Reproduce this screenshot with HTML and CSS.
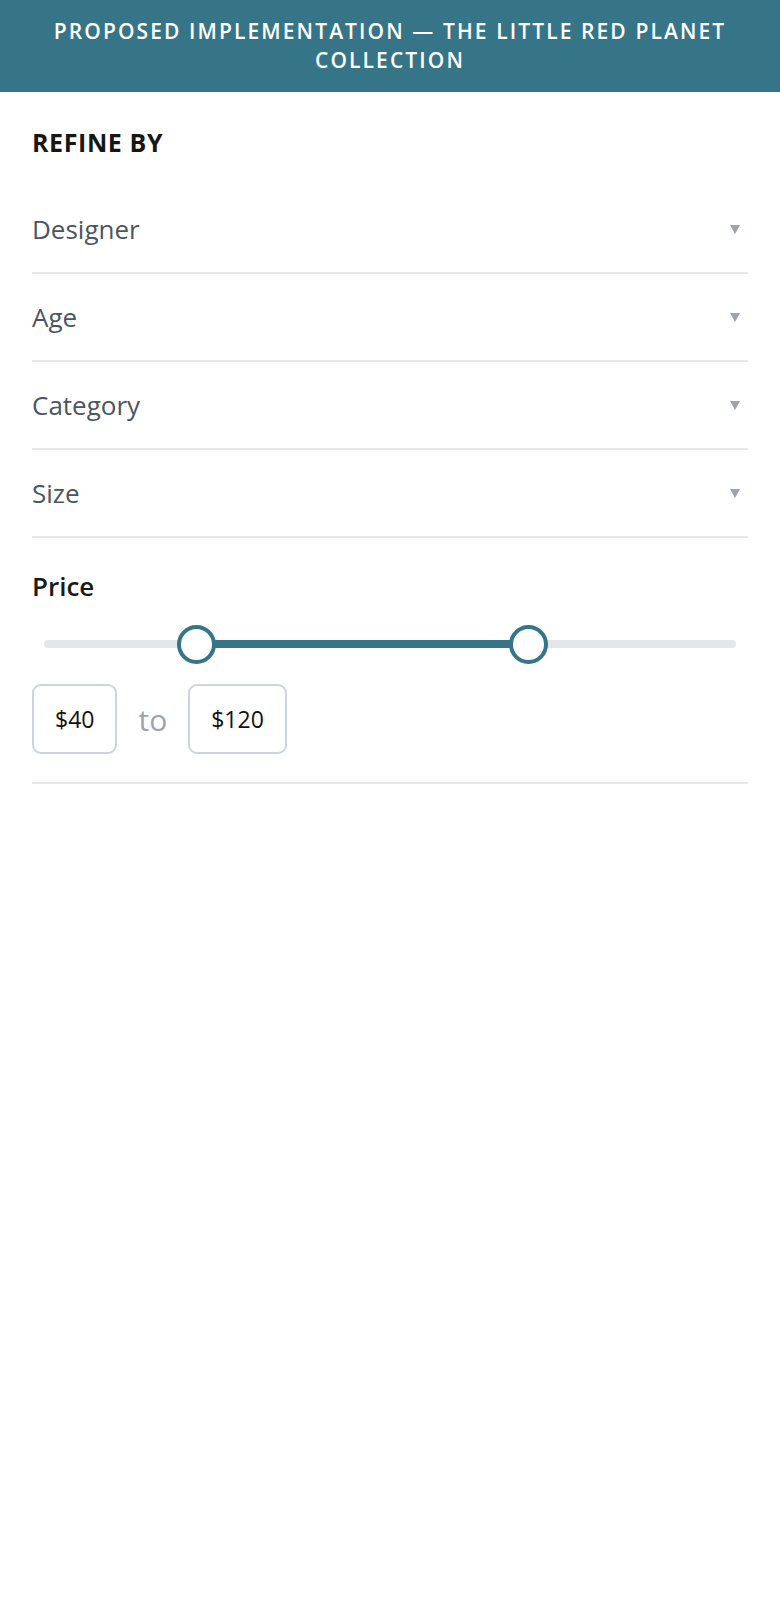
FILE: index.html
```html
<!DOCTYPE html>
<html lang="en">
<head>
  <meta charset="UTF-8" />
  <meta name="viewport" content="width=device-width, initial-scale=1.0">
  <title>Refine By</title>
  <link rel="stylesheet" href="styles.css">
</head>
<body>
  <header class="banner">Proposed Implementation — The Little Red Planet Collection</header>

  <main class="filters">
    <h2 class="filters-title">Refine by</h2>

    <div class="facet"><span>Designer</span><span class="caret"></span></div>
    <div class="facet"><span>Age</span><span class="caret"></span></div>
    <div class="facet"><span>Category</span><span class="caret"></span></div>
    <div class="facet"><span>Size</span><span class="caret"></span></div>

    <section class="price">
      <h3 class="price-title">Price</h3>
      <div class="range">
        <div class="track">
          <div class="fill" style="left: 22%; width: 48%;"></div>
          <span class="thumb" style="left: 22%;"></span>
          <span class="thumb" style="left: 70%;"></span>
        </div>
      </div>
      <div class="price-inputs">
        <div class="price-box">$40</div>
        <span class="to">to</span>
        <div class="price-box">$120</div>
      </div>
    </section>
  </main>
</body>
</html>
```

FILE: styles.css
```css
body {
  margin: 0;
  font-family: "Open Sans", "Noto Sans", sans-serif;
  background: #fff;
  color: #111;
}
.banner {
  background: #367587;
  color: #fff;
  text-align: center;
  text-transform: uppercase;
  font-size: 21px;
  font-weight: 600;
  letter-spacing: 2.1px;
  line-height: 29px;
  padding: 17px 24px;
}
.filters {
  padding: 34px 32px;
}
.filters-title {
  margin: 0 0 28px;
  font-size: 25px;
  font-weight: 700;
  letter-spacing: 0.6px;
  line-height: 32px;
  text-transform: uppercase;
  color: #161616;
}
.facet {
  display: flex;
  justify-content: space-between;
  align-items: center;
  padding: 24px 0;
  line-height: 38px;
  font-size: 26px;
  color: #4b5563;
  border-bottom: 2px solid #e8e8ea;
}
.caret {
  width: 0;
  height: 0;
  margin-right: 8px;
  border-left: 5px solid transparent;
  border-right: 5px solid transparent;
  border-top: 9px solid #9ca3af;
}
.price {
  padding: 30px 0 28px;
  border-bottom: 2px solid #e8e8ea;
}
.price-title {
  margin: 0;
  font-size: 26px;
  font-weight: 600;
  line-height: 36px;
  color: #1a1a1a;
}
.range {
  padding: 36px 12px 20px;
}
.track {
  position: relative;
  height: 8px;
  border-radius: 4px;
  background: #e5e6ea;
}
.fill {
  position: absolute;
  top: 0;
  bottom: 0;
  background: #367587;
}
.thumb {
  position: absolute;
  top: 50%;
  width: 31px;
  height: 31px;
  margin: -19.5px 0 0 -19.5px;
  border: 4px solid #367587;
  border-radius: 50%;
  background: #fff;
}
.price-inputs {
  display: flex;
  align-items: center;
  gap: 21px;
  margin-top: 16px;
}
.price-box {
  padding: 17px 21px;
  font-size: 23px;
  line-height: 32px;
  color: #111;
  border: 2px solid #cdd4de;
  border-radius: 9px;
}
.to {
  font-size: 30px;
  color: #9ca3af;
}
```
